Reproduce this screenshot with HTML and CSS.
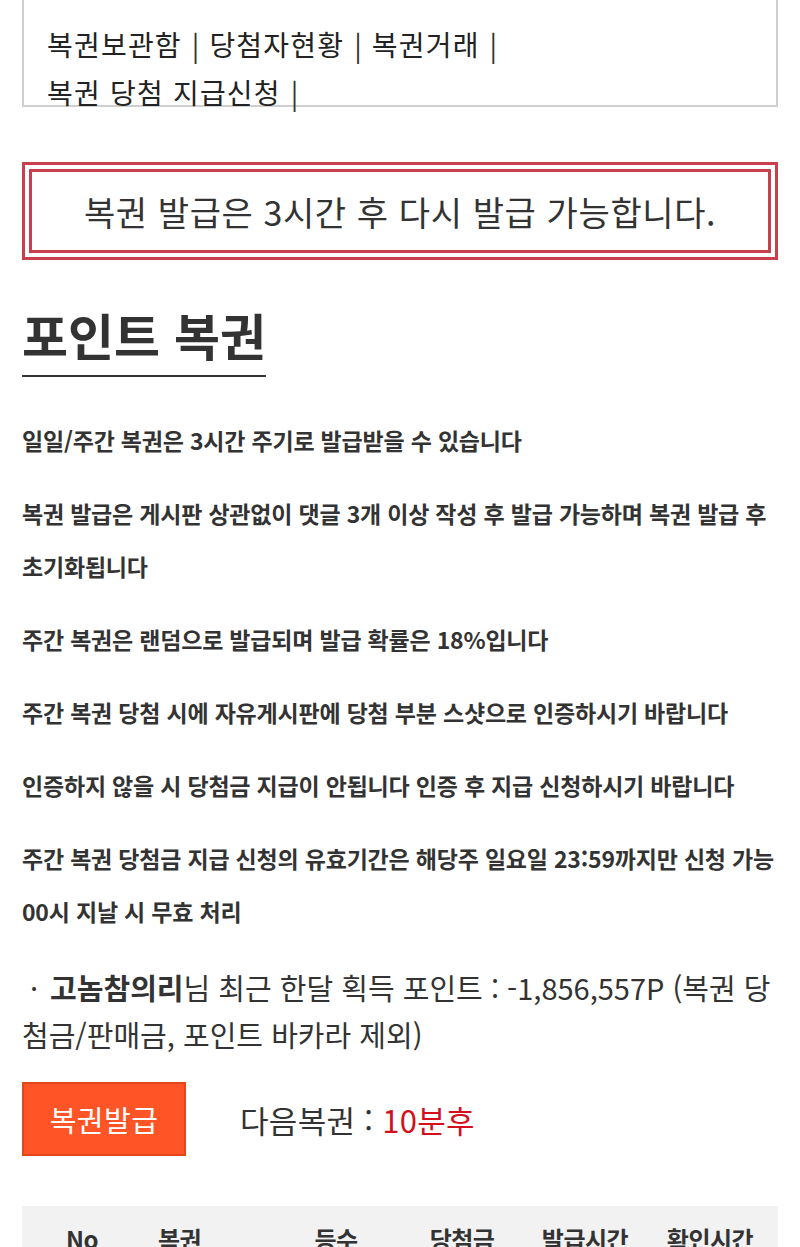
FILE: index.html
```html
<!DOCTYPE html>
<html lang="ko">
<head>
<meta charset="utf-8">
<title>포인트 복권</title>
<link rel="stylesheet" href="styles.css">
</head>
<body>
<div class="page">
  <nav class="topnav">
    <div class="navline">복권보관함<span class="sep">|</span>당첨자현황<span class="sep">|</span>복권거래<span class="sep">|</span></div>
    <div class="navline">복권 당첨 지급신청<span class="sep">|</span></div>
  </nav>

  <div class="notice">
    <div class="notice-inner">복권 발급은 3시간 후 다시 발급 가능합니다.</div>
  </div>

  <h1 class="title">포인트 복권</h1>

  <div class="rules">
    <p>일일/주간 복권은 3시간 주기로 발급받을 수 있습니다</p>
    <p>복권 발급은 게시판 상관없이 댓글 3개 이상 작성 후 발급 가능하며 복권 발급 후 초기화됩니다</p>
    <p>주간 복권은 랜덤으로 발급되며 발급 확률은 18%입니다</p>
    <p>주간 복권 당첨 시에 자유게시판에 당첨 부분 스샷으로 인증하시기 바랍니다</p>
    <p>인증하지 않을 시 당첨금 지급이 안됩니다 인증 후 지급 신청하시기 바랍니다</p>
    <p>주간 복권 당첨금 지급 신청의 유효기간은 해당주 일요일 23:59까지만 신청 가능 00시 지날 시 무효 처리</p>
  </div>

  <p class="points"><span class="dot">·</span><b>고놈참의리</b>님 최근 한달 획득 포인트 : -1,856,557P (복권 당첨금/판매금, 포인트 바카라 제외)</p>

  <div class="issue-row">
    <button class="issue-btn" type="button">복권발급</button>
    <span class="next">다음복권 : <span class="next-time">10분후</span></span>
  </div>

  <table class="ticket-table">
    <colgroup>
      <col class="c-no"><col class="c-ticket"><col class="c-rank"><col class="c-prize"><col class="c-issued"><col class="c-checked">
    </colgroup>
    <thead>
      <tr>
        <th>No</th>
        <th class="left">복권</th>
        <th>등수</th>
        <th>당첨금</th>
        <th>발급시간</th>
        <th>확인시간</th>
      </tr>
    </thead>
    <tbody>
      <tr><td colspan="6" class="empty"></td></tr>
    </tbody>
  </table>
</div>
</body>
</html>
```

FILE: styles.css
```css
* { box-sizing: border-box; }

html, body {
  margin: 0;
  padding: 0;
  background: #fff;
}

body {
  font-family: "Noto Sans CJK KR", "Noto Sans", sans-serif;
  color: #333;
}

.page {
  padding: 0 22px;
}

.topnav {
  height: 107px;
  border: 2px solid #cfcfcf;
  border-top: none;
  padding: 20px 0 0 23px;
  font-size: 28px;
  line-height: 48px;
  color: #222;
  letter-spacing: 1.2px;
}

.navline {
  white-space: nowrap;
}

.sep {
  display: inline-block;
  margin: 0 10px 0 10px;
  font-weight: 400;
  color: #333;
  letter-spacing: 0;
}

.notice {
  margin-top: 55px;
  border: 3px solid #c8404e;
  padding: 4px;
}

.notice-inner {
  border: 3px solid #c8404e;
  height: 84px;
  display: flex;
  align-items: center;
  justify-content: center;
  font-size: 34px;
  color: #333;
  letter-spacing: 0.6px;
}

.title {
  display: inline-block;
  margin: 40px 0 0;
  padding-bottom: 6px;
  border-bottom: 2px solid #333;
  font-size: 50px;
  font-weight: 700;
  line-height: 69px;
  color: #333;
  letter-spacing: 0;
}

.rules {
  margin-top: 37px;
}

.rules p {
  margin: 0 0 20px;
  font-size: 23px;
  font-weight: 700;
  line-height: 53px;
  color: #333;
  letter-spacing: -0.2px;
}

.points {
  margin: 26px 0 0;
  font-size: 29px;
  line-height: 47px;
  color: #333;
  letter-spacing: 0;
}

.points .dot {
  padding: 0 12px 0 8px;
}

.points b {
  font-weight: 700;
}

.issue-row {
  margin-top: 24px;
  display: flex;
  align-items: center;
  gap: 54px;
}

.issue-btn {
  width: 164px;
  height: 74px;
  background: #ff5526;
  border: 2px solid #e2461c;
  color: #fff;
  font-family: inherit;
  font-size: 29px;
  padding: 0;
  letter-spacing: 0.5px;
}

.next {
  font-size: 31px;
  color: #333;
  letter-spacing: 0.3px;
}

.next-time {
  color: #d4101c;
}

.ticket-table {
  margin-top: 50px;
  width: 100%;
  border-collapse: collapse;
  table-layout: fixed;
}

.c-no { width: 120px; }
.c-ticket { width: 134px; }
.c-rank { width: 120px; }
.c-prize { width: 132px; }
.c-issued { width: 114px; }
.c-checked { width: 136px; }

.ticket-table thead th {
  background: #f2f2f2;
  font-size: 24px;
  font-weight: 700;
  color: #333;
  padding: 16px 0 22px;
  line-height: 34px;
  text-align: center;
  letter-spacing: -0.5px;
}

.ticket-table thead th.left {
  text-align: left;
  padding-left: 16px;
}

.ticket-table .empty {
  height: 60px;
}
```
